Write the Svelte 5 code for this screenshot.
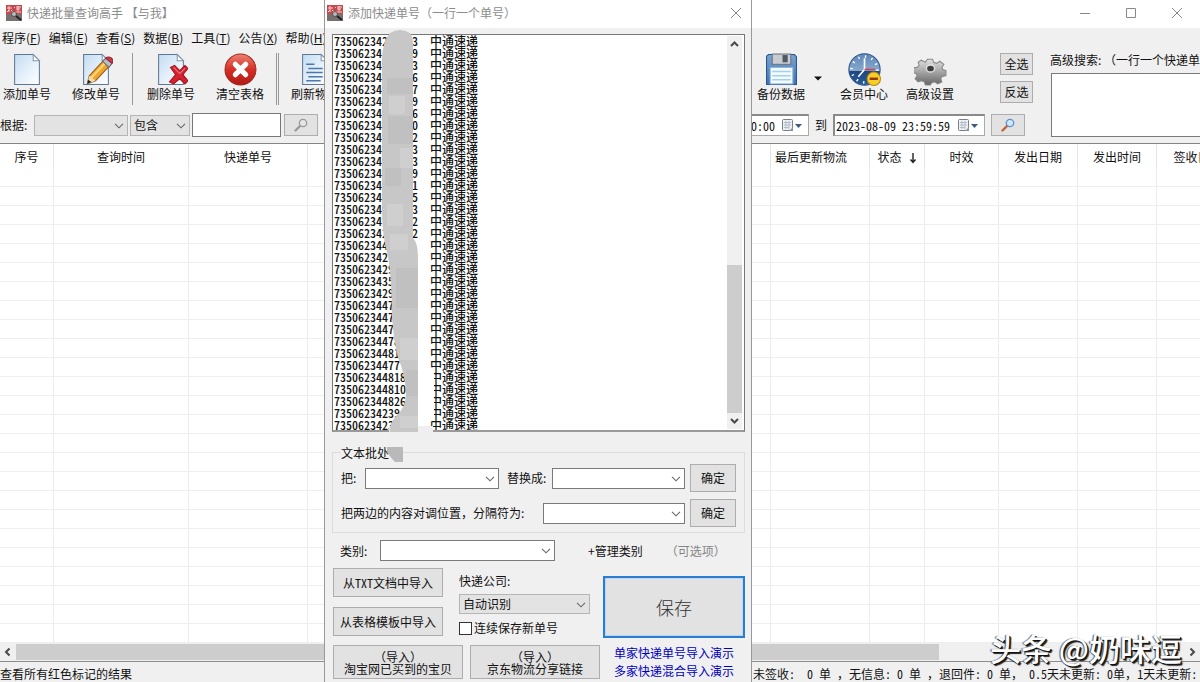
<script>
  const menus = [
    ['程序', 'F'], ['编辑', 'E'], ['查看', 'S'], ['数据', 'B'], ['工具', 'T'], ['公告', 'X'], ['帮助', 'H'],
  ];

  const columns = [
    { label: '序号', width: 54 },
    { label: '查询时间', width: 135 },
    { label: '快递单号', width: 119 },
    { label: '', width: 463 },
    { label: '最后更新物流', width: 99, start: true },
    { label: '状态', width: 55, sort: true },
    { label: '时效', width: 74 },
    { label: '发出日期', width: 79 },
    { label: '发出时间', width: 79 },
    { label: '签收日', width: 70 },
  ];
  const rows = Array.from({ length: 25 });

  const counts = ['未签收:  0 单 ', '无信息: 0 单 ', '退回件: 0 单', ' 0.5天未更新: 0单', '1天未更新:'];

  const carrier = '中通速递';
  const numbers = [
    ['735062342', '3'], ['73506234', '9'], ['73506234', '3'], ['73506234', '6'], ['73506234', '7'],
    ['73506234', '9'], ['73506234', '6'], ['73506234', '0'], ['73506234', '2'], ['73506234', '3'],
    ['73506234', '3'], ['73506234', '9'], ['73506234', '1'], ['73506234', '5'], ['73506234', '3'],
    ['73506234', '2'], ['735062342', '2'], ['7350623444', ''], ['735062342', ''], ['7350623429', ''],
    ['7350623435', ''], ['7350623429', ''], ['7350623447', ''], ['7350623447', ''], ['73506234472', ''],
    ['73506234478', ''], ['73506234481', ''], ['73506234477', ''], ['735062344818', ''],
    ['735062344810', ''], ['735062344826', ''], ['73506234239', ''], ['7350623423', ''],
  ];
  let entries = $state(
    numbers.map(([head, tail]) => head.padEnd(13) + (tail || ' ') + '  ' + carrier).join('\n')
  );
  let keepSaving = $state(false);
  let fromTime = $state('00:00');
  let toTime = $state('2023-08-09 23:59:59');
</script>

{#snippet appIcon()}
  <svg class="app-icon" viewBox="0 0 16 16" aria-hidden="true">
    <rect width="16" height="16" fill="#77706f" />
    <rect width="16" height="9" fill="#c9484c" />
    <path d="M1 3h5M3 1v6M1 7l2-2M5 5l2 2M8 2l1 1M10 2h5M10 4h4M12 1v5M8 7h7" stroke="#f5d5d5" fill="none" />
    <circle cx="8" cy="9" r="2.5" fill="#b9b9b9" stroke="#555" />
    <path d="M10 11l5 4" stroke="#222" stroke-width="2" />
  </svg>
{/snippet}

{#snippet chevron()}
  <svg class="chevron" viewBox="0 0 10 6" aria-hidden="true"><path d="M1 .8l4 4 4-4" fill="none" stroke="#666" stroke-width="1.1" /></svg>
{/snippet}

{#snippet sheet()}
  <path d="M3.500 1.500h18l6 6v23h-24z" fill="url(#paper)" stroke="#5d7893" />
  <path d="M21.500 1.500v6h6z" fill="#fff" stroke="#8097ad" />
{/snippet}

{#snippet lens(active)}
  <svg class="lens" viewBox="0 0 14 14" aria-hidden="true">
    <path d="M1.500 12.500l4.500-4.500" stroke={active ? '#c4623c' : '#9a9a9a'} stroke-width="2.400" stroke-linecap="round" />
    <circle cx="9" cy="5" r="3.700" fill={active ? '#cfe6fb' : '#e4e4e4'} stroke={active ? '#5b92cf' : '#9a9a9a'} stroke-width="1.300" />
  </svg>
{/snippet}

{#snippet picker()}
  <button class="picker" aria-label="选择日期">
    <svg viewBox="0 0 22 13" aria-hidden="true">
      <rect x="1.500" y=".5" width="10" height="11" rx="1" fill="#eef1f4" stroke="#777f88" />
      <path d="M3 3.500h7M3 6h7M3 8.500h5M5 2v8M8 2v8" stroke="#b4bcc6" />
      <path d="M8 12l4-4v4z" fill="#8a929c" />
      <path d="M14 5h7l-3.500 4z" fill="#41597a" />
    </svg>
  </button>
{/snippet}

<svg class="defs" aria-hidden="true">
  <defs>
    <linearGradient id="paper" x1="0" y1="0" x2="1" y2="1"><stop offset="0" stop-color="#c3dcf2" /><stop offset=".6" stop-color="#e9f3fb" /><stop offset="1" stop-color="#fff" /></linearGradient>
    <linearGradient id="red" x1="0" y1="0" x2="0" y2="1"><stop offset="0" stop-color="#ee8174" /><stop offset=".5" stop-color="#d62f25" /><stop offset="1" stop-color="#b31913" /></linearGradient>
    <linearGradient id="disk" x1="0" y1="0" x2="0" y2="1"><stop offset="0" stop-color="#7ba3cf" /><stop offset="1" stop-color="#3d76b4" /></linearGradient>
    <linearGradient id="gear" x1="0" y1="0" x2="0" y2="1"><stop offset="0" stop-color="#e2e2e2" /><stop offset="1" stop-color="#666" /></linearGradient>
    <linearGradient id="clock" x1="0" y1="0" x2="0" y2="1"><stop offset="0" stop-color="#5b86ba" /><stop offset=".55" stop-color="#8aa9cc" /><stop offset=".56" stop-color="#1d4781" /><stop offset="1" stop-color="#2a5c9b" /></linearGradient>
  </defs>
</svg>

<div class="window">
  <header class="titlebar">
    {@render appIcon()}
    <span>快递批量查询高手 【与我】</span>
    <div class="controls">
      <button aria-label="最小化"><svg viewBox="0 0 12 12"><path d="M1 6.500h10" /></svg></button>
      <button aria-label="最大化"><svg viewBox="0 0 12 12"><path d="M1.500 1.500h9v9h-9z" /></svg></button>
      <button aria-label="关闭"><svg viewBox="0 0 12 12"><path d="M1 1l10 10M11 1L1 11" /></svg></button>
    </div>
  </header>

  <div class="chrome">
    <div class="chrome-left">
      <nav class="menu">
        {#each menus as [name, key]}
          <button>{name}(<u>{key}</u>)</button>
        {/each}
      </nav>
      <div class="tools">
        <button class="tool"><svg viewBox="0 0 32 32">{@render sheet()}</svg>添加单号</button>
        <button class="tool">
          <svg viewBox="0 0 32 32">
            {@render sheet()}
            <path d="M7 30l2-8L24 6l6 5-15 16z" fill="#f2a52d" stroke="#8c5418" />
            <path d="M11 24L26 8" stroke="#ffd777" stroke-width="2" />
            <path d="M22 8l3-3 6 5-3 4z" fill="#b8bfc8" stroke="#666" />
            <path d="M25 5c3-3 9 1 6 5z" fill="#d53b4b" stroke="#8d2230" />
            <path d="M7 30l2-8 6 5z" fill="#f4dcb2" /><path d="M7 30l1-4 3 2z" fill="#222" />
          </svg>修改单号
        </button>
        <i class="sep"></i>
        <button class="tool">
          <svg viewBox="0 0 32 32">
            {@render sheet()}
            <path d="M15 14l4-2 5 5 5-5 3 3-5 6 5 6-3 3-5-5-6 5-4-2 6-7z" fill="#d3222e" stroke="#a3141f" />
            <path d="M18 14l6 6 5-5" fill="none" stroke="#f08087" />
          </svg>删除单号
        </button>
        <button class="tool">
          <svg viewBox="0 0 32 32">
            <circle cx="16" cy="16" r="15" fill="url(#red)" stroke="#9d2922" />
            <path d="M11 11l10 10M21 11L11 21" stroke="#fff" stroke-width="5" stroke-linecap="round" />
          </svg>清空表格
        </button>
        <i class="sep double"></i>
        <button class="tool">
          <svg viewBox="0 0 32 32">
            {@render sheet()}
            <path d="M7 11h8M9 15h14M7 19h16M9 23h14M7 27h14" stroke="#4d78ad" stroke-width="1.500" />
          </svg>刷新物流
        </button>
      </div>
      <div class="filter">
        <label for="by">根据:</label>
        <span class="combo gray by"><select id="by"><option></option></select>{@render chevron()}</span>
        <span class="combo gray match"><select aria-label="匹配方式"><option>包含</option></select>{@render chevron()}</span>
        <input class="keyword" aria-label="关键字" />
        <button class="push find" aria-label="查找">{@render lens(false)}</button>
      </div>
    </div>

    <div class="chrome-right">
      <div class="ops">
        <div class="tools">
          <button class="tool">
            <svg viewBox="0 0 32 32">
              <path d="M1.500 3l2-1.500h25l2 2v27h-29z" fill="url(#disk)" stroke="#27548a" />
              <rect x="7" y="1" width="18" height="10" fill="#c8cbd0" stroke="#6a7480" /><rect x="17" y="2" width="5" height="7" fill="#4f5965" />
              <rect x="5" y="14" width="22" height="16" fill="#f4faff" stroke="#8db4dd" /><path d="M7 18h18M7 22h18M7 26h18" stroke="#9fd2f0" stroke-width="1.500" />
            </svg>备份数据
          </button>
          <button class="more" aria-label="更多备份选项"><svg viewBox="0 0 8 5"><path d="M0 .5h8l-4 4z" fill="#111" /></svg></button>
          <button class="tool">
            <svg viewBox="0 0 32 32">
              <circle cx="16" cy="16" r="15.200" fill="url(#clock)" stroke="#2d578b" />
              <circle cx="16" cy="16" r="12.500" fill="none" stroke="#fff" stroke-width="2.500" stroke-dasharray="1.300 5.245" />
              <path d="M16 5v11l-6 7" fill="none" stroke="#fff" stroke-width="1.600" /><path d="M16 16h10" stroke="#cb4355" stroke-width="1.600" />
              <circle cx="25" cy="25" r="6.500" fill="#f5ce27" stroke="#b38a10" /><path d="M21 25h8" stroke="#9a3511" stroke-width="2.400" />
            </svg>会员中心
          </button>
          <button class="tool">
            <svg viewBox="0 0 32 32">
              <path d="M13 6h5l1 3 3 1 3-2 4 3-2 3 1 2 3 1v5l-4 1-1 2 1 3-4 2-3-2-3 1-1 2h-5l-1-3-3-1-3 1-3-3 2-3-1-2-3-1 1-5 3 0 2-2-1-3 3-2 4 2z" fill="url(#gear)" stroke="#888" />
              <ellipse cx="16" cy="15" rx="4" ry="3.500" fill="#3d3d3d" stroke="#dedede" stroke-width="1.500" />
            </svg>高级设置
          </button>
        </div>
        <div class="dates">
          <span class="date from"><input aria-label="开始时间" bind:value={fromTime} />{@render picker()}</span>
          <label for="to">到</label>
          <span class="date"><input id="to" bind:value={toTime} />{@render picker()}</span>
          <button class="push find" aria-label="按日期查找">{@render lens(true)}</button>
        </div>
      </div>
      <div class="picks">
        <button class="push">全选</button>
        <button class="push">反选</button>
      </div>
      <div class="advanced">
        <label for="adv">高级搜索: （一行一个快递单号）</label>
        <textarea id="adv"></textarea>
      </div>
    </div>
  </div>

  <div class="grid">
    <table>
      <colgroup>{#each columns as c}<col style:width="{c.width}px" />{/each}</colgroup>
      <thead>
        <tr>{#each columns as c}<th class:start={c.start}>{c.label}{#if c.sort}<svg class="sort" viewBox="0 0 8 12" aria-label="降序"><path d="M4 1v9M1.500 7.500L4 10.500l2.500-3" fill="none" stroke="#222" stroke-width="1.400" /></svg>{/if}</th>{/each}</tr>
      </thead>
      <tbody>
        {#each rows as _}<tr>{#each columns as _c}<td></td>{/each}</tr>{/each}
      </tbody>
    </table>
  </div>

  <div class="hscroll">
    <svg viewBox="0 0 16 16"><path d="M9.500 4.500L6 8l3.500 3.500" /></svg>
    <div class="track"><div class="thumb"></div></div>
    <svg viewBox="0 0 16 16"><path d="M6.500 4.500L10 8l-3.500 3.500" /></svg>
  </div>

  <footer>
    <span class="hint">查看所有红色标记的结果</span>
    <span class="counts">{#each counts as part, i}{#if i}<span class="comma">，</span>{/if}{part}{/each}</span>
  </footer>

  <div class="watermark">头条 @奶味逗</div>

  <section class="dialog" role="dialog" aria-label="添加快递单号">
    <header class="titlebar">
      {@render appIcon()}
      <span>添加快递单号（一行一个单号）</span>
      <div class="controls">
        <button aria-label="关闭"><svg viewBox="0 0 12 12"><path d="M1 1l10 10M11 1L1 11" /></svg></button>
      </div>
    </header>
    <div class="body">
      <div class="entries">
        <textarea aria-label="快递单号" bind:value={entries} spellcheck="false"></textarea>
        <div class="vscroll">
          <svg viewBox="0 0 15 16"><path d="M4 10l3.500-3.500L11 10" /></svg>
          <div class="vtrack"><div class="vthumb"></div></div>
          <svg viewBox="0 0 15 16"><path d="M4 6l3.500 3.500L11 6" /></svg>
        </div>
      </div>

      <fieldset>
        <legend>文本批处</legend>
        <div class="line">
          <label for="find">把:</label>
          <span class="combo find-text"><select id="find"><option></option></select>{@render chevron()}</span>
          <label for="rep">替换成:</label>
          <span class="combo rest"><select id="rep"><option></option></select>{@render chevron()}</span>
          <button class="push ok">确定</button>
        </div>
        <div class="line">
          <label class="long" for="delim">把两边的内容对调位置，分隔符为:</label>
          <span class="combo rest"><select id="delim"><option></option></select>{@render chevron()}</span>
          <button class="push ok">确定</button>
        </div>
      </fieldset>

      <div class="category">
        <label for="cat">类别:</label>
        <span class="combo cat"><select id="cat"><option></option></select>{@render chevron()}</span>
        <button class="manage">+管理类别</button>
        <span class="optional">（可选项）</span>
      </div>

      <div class="actions">
        <div class="imports">
          <button class="push">从<span class="txt">TXT</span>文档中导入</button>
          <button class="push">从表格模板中导入</button>
        </div>
        <div class="company">
          <label for="co">快递公司:</label>
          <span class="combo gray"><select id="co"><option>自动识别</option></select>{@render chevron()}</span>
          <label class="check"><input type="checkbox" bind:checked={keepSaving} />连续保存新单号</label>
        </div>
        <button class="save">保存</button>
      </div>

      <div class="sources">
        <button class="push">（导入）<br />淘宝网已买到的宝贝</button>
        <button class="push">（导入）<br />京东物流分享链接</button>
        <div class="links">
          <a href="#single">单家快递单号导入演示</a>
          <a href="#multi">多家快递混合导入演示</a>
        </div>
      </div>
    </div>

    <svg class="smudge" viewBox="0 0 56 436" aria-hidden="true">
      <path d="M36 10h12v395h-12zM48 336l4 4v50l-4 2z" fill="#fff" />
      <path d="M7 396h44v14h-44z" fill="#efefef" />
      <path d="M8 3q10-6 20 0q3 4 3 10v195q5 5 5 20v174H8q-2-6 6-16q10-8 10-24q-2-22-8-34q-4-16-6-40q0-36-4-62q-6-20-6-46V30Q0 12 8 3z" fill="#c7c7c7" />
      <path d="M5 48h26v16H5zM6 86h25v28H6zM3 138h16v18H3zM14 238h22v40H14zM24 340h12v26H24z" fill="#c0c0c0" />
      <path d="M7 66h16v18H7zM18 118h13v20H18zM5 174h16v22H5zM8 204h18v16H8zM18 308h18v22H18zM18 386h18v12H18z" fill="#cfcfcf" />
      <path d="M5 417h16v15h-8q-4-4-8-10z" fill="#b9b9b9" />
    </svg>
  </section>
</div>

<style>
  :global(body) { margin: 0; overflow: hidden; }
  .window, .window * { box-sizing: border-box; }
  .window {
    position: relative; display: flex; flex-direction: column; height: 100vh; overflow: hidden;
    background: #f0f0f0; color: #111;
    font: 12px/16px "Noto Sans CJK SC", sans-serif;
    white-space: nowrap;
  }
  button, input, select, textarea { font: inherit; color: inherit; border-radius: 0; margin: 0; }
  button { padding: 0; border: 0; background: none; }
  .defs { display: block; width: 0; height: 0; }

  .titlebar { display: flex; align-items: center; flex: none; height: 28px; padding-left: 6px; padding-bottom: 2px; gap: 5px; background: #fff; color: #8c8c8c; }
  .app-icon { width: 16px; height: 16px; }
  .controls { display: flex; margin-left: auto; }
  .controls button { display: grid; place-items: center; width: 46px; height: 24px; }
  .controls svg { width: 12px; height: 12px; fill: none; stroke: #888; }

  .chrome { display: grid; grid-template-columns: 27% 428px minmax(0, 1fr); flex: none; height: 115px; }
  .chrome-left { grid-column: 1; min-width: 0; overflow: hidden; }
  .menu { display: flex; gap: 8px; height: 20px; padding-left: 2px; align-items: center; }
  .menu button { flex: none; }
  .tools { display: flex; gap: 3px; }
  .chrome-left .tools { margin: 5px 0 0 -6px; }
  .tool { display: flex; flex-direction: column; align-items: center; flex: none; width: 66px; height: 52px; line-height: 16px; }
  .tool svg { flex: none; width: 33px; height: 33px; }
  .sep { flex: none; width: 3px; border-left: 1px solid #999; }
  .double { border-right: 1px solid #999; }
  .filter { display: flex; align-items: center; height: 24px; margin-top: 8px; }
  .filter > * { flex: none; }
  .filter label { width: 34px; }

  .combo { position: relative; display: inline-flex; height: 21px; }
  .combo select { appearance: none; width: 100%; height: 100%; padding: 0 18px 0 3px; border: 1px solid #7a7a7a; background: #fff; outline: 0; }
  .combo.gray select { border-color: #b5b5b5; background: #e3e3e3; }
  .chevron { position: absolute; right: 4px; top: 8px; width: 10px; height: 6px; pointer-events: none; }
  .by { width: 94px; }
  .match { width: 60px; margin-left: 2px; }
  .keyword { width: 89px; height: 24px; margin-left: 2px; padding: 0 3px; border: 1px solid #777; background: #fff; }
  .push { border: 1px solid #adadad; background: #e2e2e2; }
  .find { display: grid; place-items: center; width: 34px; height: 22px; margin-left: 3px; }
  .lens { width: 14px; height: 14px; }

  .chrome-right { grid-column: 3; display: flex; min-width: 0; overflow: hidden; }
  .ops { flex: none; width: 248px; padding-top: 25px; }
  .ops .tools { margin-left: -4px; gap: 0; }
  .more { width: 17px; height: 50px; }
  .more svg { display: block; width: 8px; height: 5px; }
  .dates { display: flex; align-items: center; height: 24px; margin-top: 8px; }
  .dates > * { flex: none; }
  .dates label { width: 24px; text-align: center; }
  .date { display: flex; width: 152px; height: 22px; border: 2px solid #8a8a8a; border-right: 1px solid #aaa; border-bottom: 1px solid #aaa; background: #fff; }
  .date input { flex: 1; min-width: 0; padding: 0 1px; border: 0; background: none; outline: 0; font-feature-settings: "hwid"; }
  .date.from { width: 77px; margin-left: -20px; }
  .date.from input { text-align: right; padding-right: 6px; }
  .picker { flex: none; width: 27px; }
  .picker svg { display: block; width: 22px; height: 13px; }
  .dates .find { margin-left: 6px; }
  .picks { display: flex; flex-direction: column; flex: none; gap: 6px; width: 51px; padding-top: 25px; }
  .picks .push { width: 33px; height: 22px; line-height: 18px; }
  .advanced { display: flex; flex-direction: column; flex: 1; min-width: 0; padding: 24px 0 6px; }
  .advanced label { margin-left: -1px; margin-bottom: 5px; }
  .advanced textarea { flex: 1; resize: none; border: 1px solid #7a7a7a; border-right: 0; background: #fff; }

  .grid { flex: 1; min-height: 0; overflow: hidden; border-top: 1px solid #858585; background: #fff; }
  table { width: 100%; min-width: 1227px; table-layout: fixed; border-collapse: separate; border-spacing: 0; }
  th { height: 24px; padding: 2px 0 0; border-right: 1px solid #e4e4e4; font-weight: 400; line-height: 16px; }
  th.start { text-align: left; padding-left: 4px; }
  th, td { overflow: hidden; }
  td { height: 19px; padding: 0; border-right: 1px solid #ececec; border-bottom: 1px solid #efefef; }
  .sort { width: 8px; height: 12px; margin-left: 7px; vertical-align: -2px; }

  .hscroll { display: flex; flex: none; height: 18px; align-items: center; background: #f0f0f0; }
  .hscroll svg { flex: none; width: 16px; height: 16px; }
  .hscroll path, .vscroll path { fill: none; stroke: #4a4a4a; stroke-width: 2; }
  .track { flex: 1; height: 16px; }
  .thumb { width: 79%; height: 16px; background: #cdcdcd; }
  footer { display: grid; grid-template-columns: 27% 428px minmax(0, 1fr); flex: none; height: 21px; padding-top: 4px; border-top: 1px solid #8c8c8c; }
  .counts { grid-column: 3; padding-left: 1px; overflow: hidden; white-space: pre; font-feature-settings: "hwid"; }
  .comma { font-feature-settings: normal; }

  .watermark { position: absolute; right: 18px; bottom: 14px; color: #fff; font-size: 31px; line-height: 40px; font-weight: 500; text-shadow: 1px 1px 0 #111, 2px 2px 1px #222, -1px 0 1px #555; }

  .dialog { position: absolute; left: 27%; top: 0; width: 428px; height: 100%; overflow: hidden; border-left: 1px solid #999; border-right: 1px solid #999; background: #f0f0f0; }
  .dialog .titlebar { padding-left: 2px; }
  .dialog .controls button { width: 30px; }
  .body { padding: 6px 6px 0 7px; }
  .entries { display: flex; height: 398px; border: 1px solid #777; border-bottom: 2px solid #999; background: #fff; }
  .entries textarea { flex: 1; min-width: 0; resize: none; overflow: hidden; border: 0; outline: 0; padding: 0 1px; background: none; font-weight: 500; line-height: 12px; font-feature-settings: "hwid"; }
  .vscroll { display: flex; flex-direction: column; width: 17px; padding: 1px 2px 1px 0; background: #fff; }
  .vscroll svg { flex: none; width: 15px; height: 16px; background: #f0f0f0; }
  .vtrack { display: flex; flex-direction: column; justify-content: flex-end; flex: 1; background: #f0f0f0; }
  .vthumb { height: 41%; background: #cdcdcd; }

  fieldset { display: flex; flex-direction: column; gap: 7px; margin: 12px 0 0; padding: 3px 8px 5px; border: 1px solid #dcdcdc; }
  legend { padding: 0; line-height: 17px; }
  .line { display: flex; align-items: center; height: 28px; }
  .line label { flex: none; padding-right: 5px; width: 24px; }
  .line .find-text { width: 134px; }
  .find-text + label { width: 53px; padding-left: 8px; }
  .line .long { width: 202px; }
  .line .rest { flex: 1; min-width: 0; }
  .ok { width: 46px; height: 28px; margin-left: 5px; }

  .category { display: flex; align-items: center; height: 21px; margin-top: 7px; padding-left: 8px; }
  .category label { width: 40px; }
  .cat { width: 175px; }
  .manage { margin-left: 33px; }
  .optional { margin-left: 23px; color: #858585; }

  .actions { display: flex; height: 70px; margin-top: 7px; padding-left: 1px; }
  .imports { display: flex; flex-direction: column; justify-content: space-between; }
  .imports { width: 110px; padding-bottom: 2px; }
  .imports .push { height: 29px; }
  .txt { font-feature-settings: "hwid"; }
  .company { display: flex; flex-direction: column; width: 131px; margin-left: 16px; padding-top: 5px; }
  .company .combo { height: 20px; margin: 5px 0 6px; }
  .check { display: flex; align-items: center; gap: 2px; }
  .check input { appearance: none; width: 13px; height: 13px; border: 1px solid #333; background: #fff; }
  .check input:checked { background: #0078d7; }
  .save { flex: 1; margin: 8px 0 0 13px; border: 2px solid #2b7cd3; box-shadow: inset 0 0 0 1px #b9d7f2; background: #e2e2e2; color: #333; font-size: 18px; font-weight: 300; }

  .sources { display: flex; gap: 7px; margin-top: 7px; padding-left: 1px; }
  .sources .push { width: 130px; height: 34px; padding-top: 1px; line-height: 12px; }
  .links { display: flex; flex-direction: column; gap: 2px; padding-left: 7px; }
  .links a { color: #0000c0; text-decoration: none; }

  .smudge { position: absolute; left: 57px; top: 30px; width: 56px; height: 436px; pointer-events: none; }
</style>
